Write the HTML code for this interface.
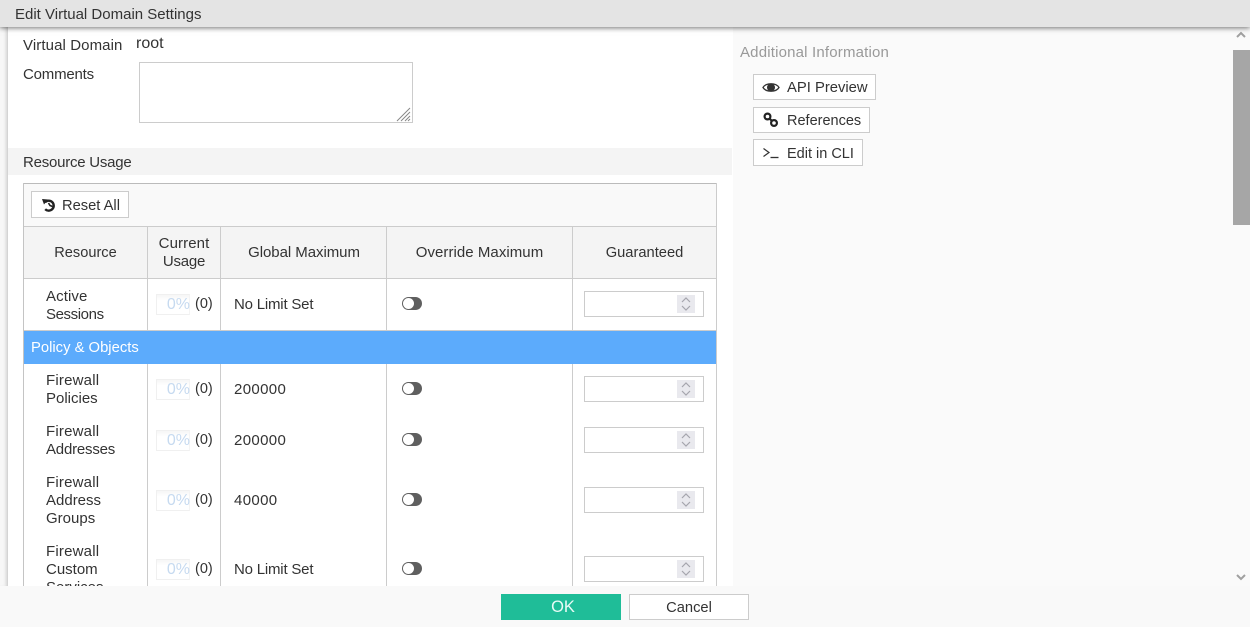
<!DOCTYPE html>
<html><head><meta charset="utf-8"><style>
html,body{margin:0;padding:0;width:1250px;height:627px;overflow:hidden;background:#fafafa}
body{position:relative;font-family:"Liberation Sans",sans-serif;font-size:15px;color:#333;}
div,span,svg{position:absolute;box-sizing:border-box}
.t{white-space:nowrap;line-height:18px}
.c{text-align:center}
.l{background:#ccc}
.btn{background:#fff;border:1px solid #ccc}
.bar{width:34px;height:21px;background:linear-gradient(#f6f6f6,#fff 30%);border:1px solid #f0f0f0;border-right-color:#f4f4f4;left:156px}
.pct{left:156px;width:34px;text-align:right;color:#c6daf0;font-size:16px;line-height:21px;white-space:nowrap}
.tog{left:402px;width:20px;height:13px;border-radius:7px;background:#5f5f5f}
.tog i{position:absolute;left:1px;top:1px;width:11px;height:11px;border-radius:50%;background:#fff;display:block}
.inp{left:584px;width:120px;height:26px;background:#fff;border:1px solid #ccc}
.spin{left:92px;top:3px;width:18px;height:18px;background:#e9e9ee}
.n{letter-spacing:.35px}
.nl{letter-spacing:-.2px}
.p{font-size:14.5px}
.f{letter-spacing:.2px}
</style></head><body>

<div style="left:0;top:27px;width:8px;height:560px;background:#f7f7f7;box-shadow:inset -3px 0 3px -1px #d4d4d4"></div>
<div style="left:8px;top:27px;width:725px;height:560px;background:#fff;box-shadow:1px 0 3px #bbb"></div>
<div style="left:733px;top:27px;width:517px;height:560px;background:#fafafa"></div>

<div class="t" style="left:23px;top:37px;letter-spacing:.1px">Virtual Domain</div>
<div class="t" style="left:136px;top:35px;font-size:16px">root</div>
<div class="t" style="left:23px;top:66px;letter-spacing:-.2px">Comments</div>
<div style="left:139px;top:62px;width:274px;height:61px;background:#fff;border:1px solid #ccc"></div>
<svg style="left:396px;top:107px" width="16" height="15"><path d="M1 14L14 1M5 14L14 5M9 14L14 9M12 14L14 12" stroke="#888" stroke-width="1" fill="none"/></svg>

<div style="left:8px;top:148px;width:724px;height:27px;background:#f4f4f4"></div>
<div class="t" style="left:23px;top:154px;letter-spacing:-.23px">Resource Usage</div>

<div style="left:24px;top:184px;width:692px;height:42px;background:#f9f9f9"></div>
<div style="left:24px;top:227px;width:692px;height:51px;background:#f4f4f4"></div>
<div class="l" style="left:23px;top:183px;width:694px;height:1px;background:#bbb"></div>
<div class="l" style="left:23px;top:183px;width:1px;height:403px;background:#c4c4c4"></div>
<div class="l" style="left:716px;top:183px;width:1px;height:403px"></div>
<div class="l" style="left:24px;top:226px;width:692px;height:1px"></div>
<div class="l" style="left:24px;top:278px;width:692px;height:1px"></div>
<div class="l" style="left:24px;top:330px;width:692px;height:1px"></div>
<div class="l" style="left:147px;top:227px;width:1px;height:103px"></div>
<div class="l" style="left:220px;top:227px;width:1px;height:103px"></div>
<div class="l" style="left:386px;top:227px;width:1px;height:103px"></div>
<div class="l" style="left:572px;top:227px;width:1px;height:103px"></div>
<div class="l" style="left:147px;top:364px;width:1px;height:222px"></div>
<div class="l" style="left:220px;top:364px;width:1px;height:222px"></div>
<div class="l" style="left:386px;top:364px;width:1px;height:222px"></div>
<div class="l" style="left:572px;top:364px;width:1px;height:222px"></div>

<div class="btn" style="left:31px;top:191px;width:98px;height:27px"></div>
<svg style="left:41px;top:198px" width="16" height="15" viewBox="0 0 16 15"><path d="M4 4.3A5 5 0 1 1 4.2 11.2" stroke="#222" stroke-width="2.4" fill="none"/><path d="M1 1L7 1.5 3 6.5Z" fill="#222"/><path d="M7.5 5L9 7.5 11.5 8.5" stroke="#222" stroke-width="1.6" fill="none"/></svg>
<div class="t" style="left:62px;top:197px;font-size:14.7px">Reset All</div>

<div class="t c" style="left:24px;width:123px;top:244px;font-size:14.6px">Resource</div>
<div class="t c" style="left:148px;width:72px;top:235px;letter-spacing:.1px">Current<br><span style="position:static;letter-spacing:-.2px">Usage</span></div>
<div class="t c" style="left:221px;width:166px;top:244px;letter-spacing:-.05px">Global Maximum</div>
<div class="t c" style="left:387px;width:185px;top:244px;letter-spacing:.05px">Override Maximum</div>
<div class="t c" style="left:573px;width:143px;top:244px;font-size:14.7px">Guaranteed</div>

<div class="t" style="left:46px;top:288px;letter-spacing:.1px">Active<br><span style="position:static;letter-spacing:-.4px">Sessions</span></div>
<div class="bar" style="top:294px"></div><div class="pct" style="top:294px">0%</div>
<div class="t p" style="left:195px;top:295px">(0)</div>
<div class="t nl" style="left:234px;top:296px">No Limit Set</div>
<div class="tog" style="top:297px"><i></i></div>
<div class="inp" style="top:291px"><div class="spin"><svg width="18" height="18" style="left:0;top:0"><path d="M5 7L9 3 13 7M5 11L9 15 13 11" stroke="#a5a5ad" stroke-width="1.2" fill="none"/></svg></div></div>

<div style="left:24px;top:331px;width:692px;height:33px;background:#5cabfc"></div>
<div class="t" style="left:31px;top:339px;color:#fff;font-size:14.8px">Policy &amp; Objects</div>

<div class="t" style="left:46px;top:372px"><span class="f" style="position:static">Firewall</span><br>Policies</div>
<div class="bar" style="top:379px"></div><div class="pct" style="top:379px">0%</div>
<div class="t p" style="left:195px;top:380px">(0)</div>
<div class="t n" style="left:234px;top:381px">200000</div>
<div class="tog" style="top:382px"><i></i></div>
<div class="inp" style="top:376px"><div class="spin"><svg width="18" height="18" style="left:0;top:0"><path d="M5 7L9 3 13 7M5 11L9 15 13 11" stroke="#a5a5ad" stroke-width="1.2" fill="none"/></svg></div></div>

<div class="t" style="left:46px;top:423px"><span class="f" style="position:static">Firewall</span><br><span style="position:static;letter-spacing:-.2px">Addresses</span></div>
<div class="bar" style="top:430px"></div><div class="pct" style="top:430px">0%</div>
<div class="t p" style="left:195px;top:431px">(0)</div>
<div class="t n" style="left:234px;top:432px">200000</div>
<div class="tog" style="top:433px"><i></i></div>
<div class="inp" style="top:427px"><div class="spin"><svg width="18" height="18" style="left:0;top:0"><path d="M5 7L9 3 13 7M5 11L9 15 13 11" stroke="#a5a5ad" stroke-width="1.2" fill="none"/></svg></div></div>

<div class="t" style="left:46px;top:474px"><span class="f" style="position:static">Firewall</span><br>Address<br>Groups</div>
<div class="bar" style="top:490px"></div><div class="pct" style="top:490px">0%</div>
<div class="t p" style="left:195px;top:491px">(0)</div>
<div class="t n" style="left:234px;top:492px">40000</div>
<div class="tog" style="top:493px"><i></i></div>
<div class="inp" style="top:487px"><div class="spin"><svg width="18" height="18" style="left:0;top:0"><path d="M5 7L9 3 13 7M5 11L9 15 13 11" stroke="#a5a5ad" stroke-width="1.2" fill="none"/></svg></div></div>

<div class="t" style="left:46px;top:543px"><span class="f" style="position:static">Firewall</span><br>Custom<br>Services</div>
<div class="bar" style="top:559px"></div><div class="pct" style="top:559px">0%</div>
<div class="t p" style="left:195px;top:560px">(0)</div>
<div class="t nl" style="left:234px;top:561px">No Limit Set</div>
<div class="tog" style="top:562px"><i></i></div>
<div class="inp" style="top:556px"><div class="spin"><svg width="18" height="18" style="left:0;top:0"><path d="M5 7L9 3 13 7M5 11L9 15 13 11" stroke="#a5a5ad" stroke-width="1.2" fill="none"/></svg></div></div>

<div class="t" style="left:740px;top:44px;color:#999;letter-spacing:.18px">Additional Information</div>
<div class="btn" style="left:753px;top:74px;width:123px;height:26px"></div>
<svg style="left:762px;top:80px" width="18" height="14" viewBox="0 0 18 14"><path d="M1 7.5C4 2.5 14 2.5 17 7.5 14 12.5 4 12.5 1 7.5Z" fill="none" stroke="#333" stroke-width="1.3"/><circle cx="9" cy="7.5" r="4" fill="#333"/></svg>
<div class="t" style="left:787px;top:79px;font-size:14.8px">API Preview</div>
<div class="btn" style="left:753px;top:107px;width:117px;height:26px"></div>
<svg style="left:763px;top:112px" width="16" height="16" viewBox="0 0 16 16"><circle cx="4.5" cy="4.5" r="2.9" fill="none" stroke="#222" stroke-width="2.2"/><circle cx="11" cy="11" r="2.9" fill="none" stroke="#222" stroke-width="2.2"/><path d="M6.5 6.5L9 9" stroke="#222" stroke-width="2.2"/></svg>
<div class="t" style="left:787px;top:112px;font-size:14.5px">References</div>
<div class="btn" style="left:753px;top:139px;width:110px;height:27px"></div>
<svg style="left:762px;top:147px" width="18" height="14" viewBox="0 0 18 14"><path d="M1.5 1.5L7 5.5 1.5 9.5" fill="none" stroke="#333" stroke-width="1.2"/><path d="M8.5 10.5H16.5" stroke="#333" stroke-width="1.3"/></svg>
<div class="t" style="left:787px;top:145px;font-size:14.5px">Edit in CLI</div>

<div style="left:1233px;top:50px;width:17px;height:175px;background:#a6a6a6"></div>
<svg style="left:1236px;top:31px" width="10" height="7"><path d="M1 6L5 2 9 6" fill="none" stroke="#a0a0a0" stroke-width="2"/></svg>
<svg style="left:1236px;top:574px" width="10" height="7"><path d="M1 1L5 5 9 1" fill="none" stroke="#a0a0a0" stroke-width="2"/></svg>

<div style="left:0;top:586px;width:1250px;height:41px;background:#f9f9f9"></div>
<div class="t c" style="left:501px;top:594px;width:124px;height:26px;line-height:26px;color:#e9fbf6;font-size:16.5px;background:linear-gradient(90deg,#1fbd98 120px,#f9f9f9 120px)">OK</div>
<div class="t c" style="left:629px;top:594px;width:120px;height:26px;line-height:27px;background:#fff;border:1px solid #ccc;font-size:14.7px">Cancel</div>

<div style="left:0;top:0;width:1250px;height:27px;background:#e4e4e4;box-shadow:0 1px 5px rgba(0,0,0,.55)"></div>
<div class="t" style="left:15px;top:6px">Edit Virtual Domain Settings</div>
</body></html>
